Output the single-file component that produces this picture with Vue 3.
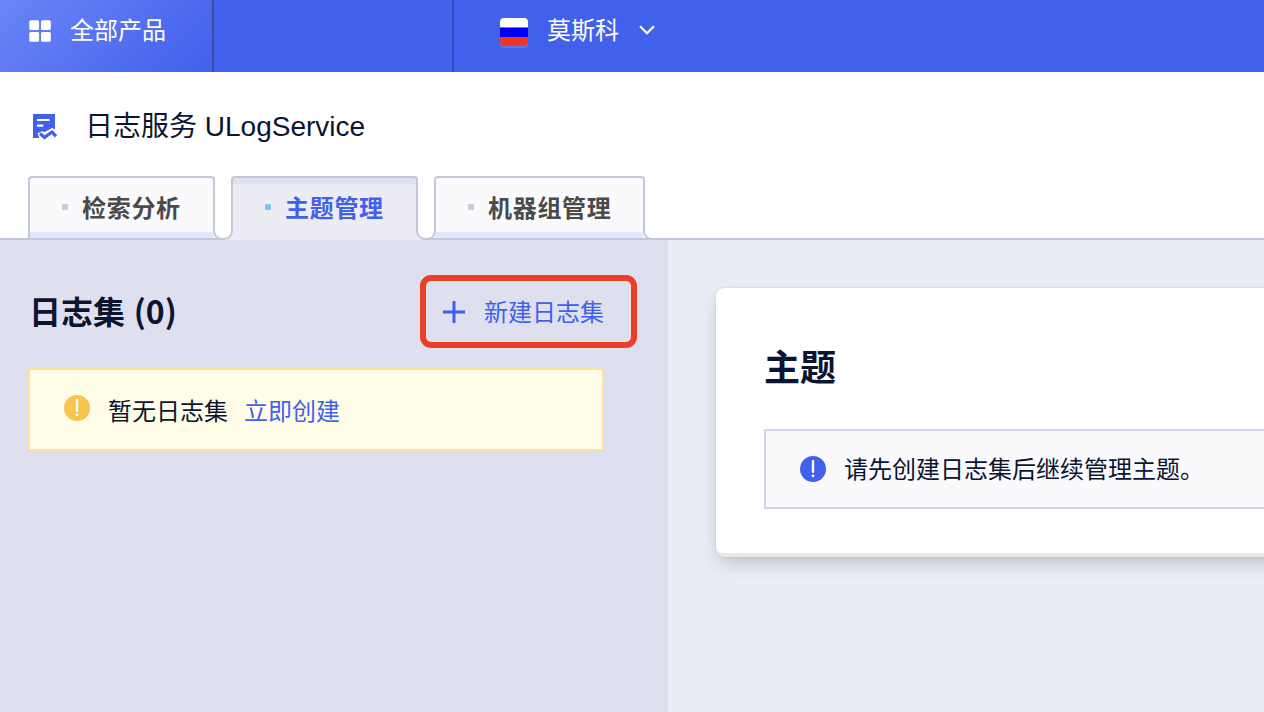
<script setup>
const tabs = [
  { label: '检索分析', active: false },
  { label: '主题管理', active: true },
  { label: '机器组管理', active: false },
]
</script>

<template>
  <div class="page">
    <header class="topbar">
      <div class="products">
        <svg class="grid-icon" width="22" height="22" viewBox="0 0 22 22" fill="#fff">
          <rect x="0.3" y="0.3" width="9.8" height="9.8" rx="1.5" />
          <rect x="12" y="0.3" width="9.8" height="9.8" rx="1.5" />
          <rect x="0.3" y="12" width="9.8" height="9.8" rx="1.5" />
          <rect x="12" y="12" width="9.8" height="9.8" rx="1.5" />
        </svg>
        <span>全部产品</span>
      </div>
      <div class="spacer"></div>
      <div class="region">
        <div class="flag"><i class="w"></i><i class="b"></i><i class="r"></i></div>
        <span>莫斯科</span>
        <svg class="chevron" width="16" height="10" viewBox="0 0 16 10" fill="none" stroke="#fff" stroke-width="2.2">
          <path d="M1 1.2 L8 8.2 L15 1.2" />
        </svg>
      </div>
    </header>

    <div class="title">
      <svg class="log-icon" width="24" height="26" viewBox="0 0 24 26">
        <path d="M0 0H22V15.4L19 14L12 18L9 17.2L4.5 19.5L6.3 24H0Z" fill="#4160ec" />
        <path d="M4 6H16.5M4 11.6H10.3" stroke="#fff" stroke-width="2.2" />
        <path d="M7 19.5L11.5 23.4L19 18L23 22.3" fill="none" stroke="#4160ec" stroke-width="3.2" />
      </svg>
      <h1>日志服务 ULogService</h1>
    </div>

    <nav class="tabs">
      <div v-for="(tab, i) in tabs" :key="tab.label" class="tab" :class="{ active: tab.active }">
        <i class="dot"></i>
        <span>{{ tab.label }}</span>
        <svg class="joint" width="20" height="10" viewBox="0 0 20 10" fill="none">
          <path v-if="tab.active" d="M0 1H10V10H0Z" fill="#ebecf4" />
          <path v-else d="M0 2H10V8H0Z" fill="#f3f5fd" />
          <path v-if="!tab.active" d="M0 9H10" stroke="#c3c7da" stroke-width="2" />
          <template v-if="i < tabs.length - 1">
            <path v-if="tabs[i + 1].active" d="M10 1H20V10H10Z" fill="#ebecf4" />
            <path v-else d="M10 1H20V8H10Z" fill="#f3f5fd" />
            <path v-if="!tabs[i + 1].active" d="M10 9H20" stroke="#c3c7da" stroke-width="2" />
            <path d="M1 0V1A8 8 0 0 0 9 9H11A8 8 0 0 0 19 1V0" fill="#fff" stroke="#c3c7da" stroke-width="2" />
          </template>
          <template v-else>
            <path d="M1 0V1A8 8 0 0 0 9 9H20V0Z" fill="#fff" />
            <path d="M1 0V1A8 8 0 0 0 9 9H20" stroke="#c3c7da" stroke-width="2" />
          </template>
        </svg>
      </div>
    </nav>

    <main class="content">
      <aside class="side">
        <div class="side-head">
          <h2>日志集 (0)</h2>
          <button class="create">
            <svg width="22" height="22" viewBox="0 0 22 22" stroke="#4160ec" stroke-width="3">
              <path d="M11 0V22M0 11H22" />
            </svg>
            <span>新建日志集</span>
          </button>
        </div>
        <div class="notice warn">
          <svg width="26" height="26" viewBox="0 0 26 26">
            <circle cx="13" cy="13" r="13" fill="#f7c54d" />
            <path d="M13 5V15.8" stroke="#fff" stroke-width="2.4" stroke-linecap="round" />
            <circle cx="13" cy="19.8" r="1.4" fill="#fff" />
          </svg>
          <span>暂无日志集</span>
          <a>立即创建</a>
        </div>
      </aside>
      <section class="body">
        <div class="card">
          <h2>主题</h2>
          <div class="notice info">
            <svg width="26" height="26" viewBox="0 0 26 26">
              <circle cx="13" cy="13" r="13" fill="#4160ec" />
              <path d="M13 5V15.8" stroke="#fff" stroke-width="2.4" stroke-linecap="round" />
              <circle cx="13" cy="19.8" r="1.4" fill="#fff" />
            </svg>
            <span>请先创建日志集后继续管理主题。</span>
          </div>
        </div>
      </section>
    </main>
  </div>
</template>

<style>
body {
  overflow: hidden;
}
</style>

<style scoped>
* {
  box-sizing: border-box;
}
.page {
  width: 1264px;
  height: 712px;
  overflow: hidden;
  display: flex;
  flex-direction: column;
  background: #fff;
  color: #0b1531;
  font: 24px/36px "Liberation Sans", "Noto Sans CJK SC", sans-serif;
}
svg {
  display: block;
  flex: none;
}
h1,
h2 {
  margin: 0;
}
.topbar {
  height: 72px;
  flex: none;
  display: flex;
  background: #4160ec;
  color: #fff;
}
.products {
  width: 214px;
  border-right: 2px solid #3b4d9e;
  padding: 13px 0 0 29px;
  display: flex;
  align-items: flex-start;
  gap: 19px;
  background: linear-gradient(135deg, #6b85f7, #4160ec);
}
.grid-icon {
  margin-top: 7px;
}
.spacer {
  width: 240px;
  border-right: 2px solid #344dbd;
}
.region {
  display: flex;
  padding: 13px 0 0 46px;
}
.flag {
  width: 28px;
  height: 30px;
  margin: 5px 19px 0 0;
  border-radius: 4px;
  overflow: hidden;
  background: #5c78e9;
}
.flag i {
  display: block;
  height: 9px;
}
.flag .w {
  background: #fff;
}
.flag .b {
  background: #0000f5;
  margin-top: 1px;
}
.flag .r {
  background: #eb3723;
  border-radius: 0 0 4px 4px;
}
.chevron {
  margin: 12px 0 0 20px;
}
.title {
  height: 104px;
  flex: none;
  display: flex;
  padding: 34px 0 0 33px;
}
.log-icon {
  margin-top: 8px;
}
.title h1 {
  margin: 1px 0 0 28px;
  font-size: 28px;
  line-height: 40px;
  font-weight: 400;
}
.tabs {
  height: 64px;
  flex: none;
  display: flex;
  gap: 16px;
  padding-left: 28px;
  box-shadow: inset 0 -2px #c3c7da;
}
.tab {
  position: relative;
  display: flex;
  height: 62px;
  padding: 13px 32.2px 0 32px;
  border: 2px solid #c3c7da;
  border-bottom: 0;
  border-radius: 4px 4px 0 0;
  background: linear-gradient(#fafafd 0 54px, #e2e7fc 54px);
  color: #4a4a4a;
  font-weight: 700;
  letter-spacing: 0.7px;
}
.tab:last-child {
  padding-right: 31.5px;
}
.tab.active {
  height: 64px;
  background: linear-gradient(#dfe1ef 0 6px, #ebecf4 6px);
  color: #4160ec;
}
.dot {
  width: 6px;
  height: 6px;
  margin: 13px 14px 0 0;
  border-radius: 1.5px;
  background: #c8cad5;
}
.active .dot {
  background: #6acdf2;
}
.joint {
  position: absolute;
  z-index: 1;
  left: 100%;
  top: 52px;
}
.content {
  flex: 1;
  display: flex;
}
.side {
  width: 668px;
  padding: 35px 31px 0 28px;
  background: #dfe0ef;
}
.side-head {
  display: flex;
  justify-content: space-between;
}
.side-head h2 {
  margin: 11px 0 0 1px;
  font: 700 32px/48px "Noto Sans CJK SC", sans-serif;
  word-spacing: 1.5px;
}
.create {
  display: flex;
  align-items: center;
  gap: 19px;
  width: 217px;
  height: 73px;
  padding: 1px 0 0 17px;
  border: 6px solid #eb4025;
  border-radius: 11px;
  background: none;
  color: #4160ec;
  font: inherit;
}
.create span,
.notice span,
.notice a {
  padding-top: 2px;
}
.notice {
  display: flex;
  align-items: center;
  border: 2px solid;
}
.warn {
  width: 576px;
  height: 83px;
  margin-top: 20px;
  padding: 3px 0 0 34px;
  border-color: #fae29a;
  background: #fffde8;
}
.warn svg {
  margin-bottom: 6px;
}
.notice span {
  margin-left: 18px;
}
.warn a {
  margin-left: 16px;
  color: #4160ec;
}
.body {
  flex: 1;
  min-width: 0;
  padding: 48px 0 0 48px;
  background: #ebedf6;
}
.card {
  width: 600px;
  height: 269px;
  padding: 51px 48px 0;
  border-bottom: 4px solid #e8e8e9;
  border-radius: 8px;
  background: #fff;
  box-shadow: 0 8px 20px -4px rgba(0, 0, 0, 0.22), 0 0 2px rgba(0, 0, 0, 0.14);
}
.card h2 {
  font: 700 36px/52px "Noto Sans CJK SC", sans-serif;
}
.info {
  height: 80px;
  margin-top: 38px;
  padding-left: 34px;
  border-color: #d2d4e8;
  background: #fafafd;
}
</style>
